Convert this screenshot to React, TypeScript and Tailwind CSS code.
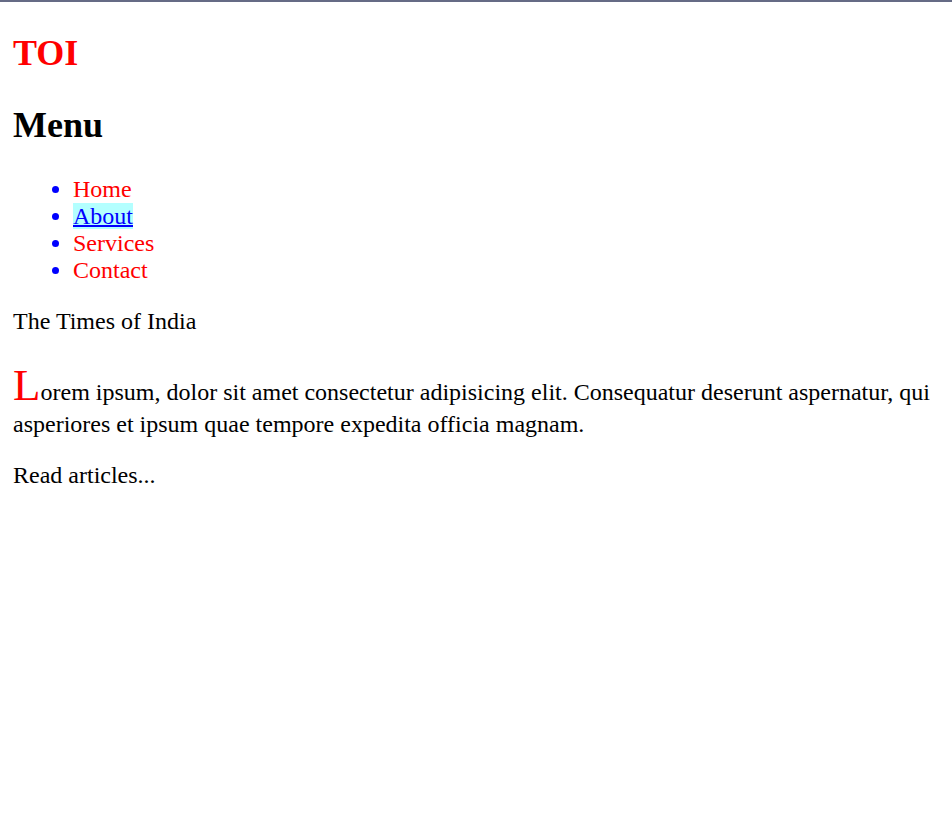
import React from 'react';

const menu = ['Home', 'About', 'Services', 'Contact'];

export default function App() {
  return (
    <div className="min-h-screen bg-white text-black font-['Liberation_Serif','Times_New_Roman',serif] text-[24px] leading-[normal]">
      <div className="h-[2px] bg-[#656b85]" />
      <div className="pl-[13px] pr-[11px] pb-[12px]">
        <h2 className="mt-[30px] mb-[30px] text-[36px] font-bold text-[#ff0000]">TOI</h2>
        <h2 className="mt-[30px] mb-[30px] text-[36px] font-bold">Menu</h2>
        <ul className="my-[24px] pl-[60px] list-disc marker:text-[#0000ff]">
          {menu.map((item) => (
            <li key={item}>
              {item === 'About' ? (
                <a href="#" className="bg-[#b3ffff] text-[#0000ff] underline decoration-[2px]">
                  {item}
                </a>
              ) : (
                <a href="#" className="text-[#ff0000] no-underline">
                  {item}
                </a>
              )}
            </li>
          ))}
        </ul>
        <p className="my-[24px]">The Times of India</p>
        <p className="my-[24px]">
          <span className="text-[45px] text-[#ff0000]">L</span>orem ipsum, dolor sit amet consectetur adipisicing elit.
          Consequatur deserunt aspernatur, qui asperiores et ipsum quae tempore expedita officia magnam.
        </p>
        <p className="my-[24px]">Read articles...</p>
      </div>
    </div>
  );
}
